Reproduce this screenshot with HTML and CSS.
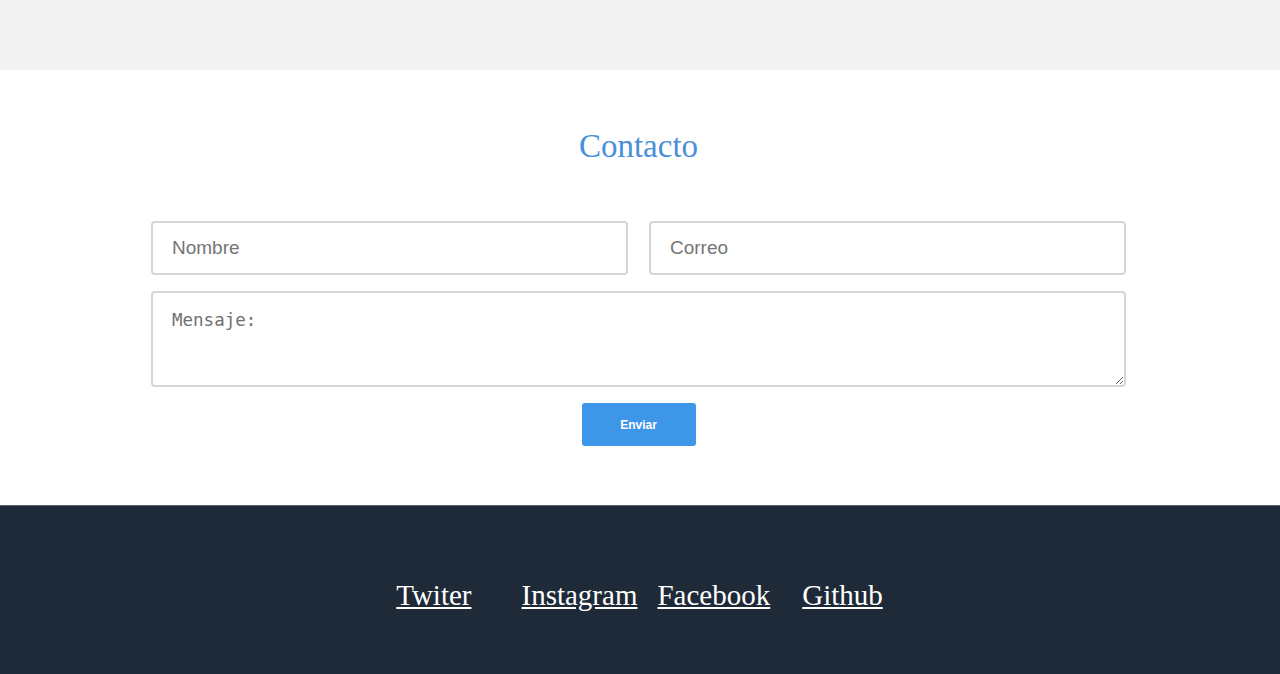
FILE: index.html
```html
<!DOCTYPE html>
<html lang="es">
<head>
<meta charset="utf-8">
<title>Contacto</title>
<link rel="stylesheet" href="styles.css">
</head>
<body>
<header class="topbar"></header>
<section class="contact">
  <h2 class="contact-title">Contacto</h2>
  <form class="contact-form">
    <div class="row">
      <input class="field" type="text" placeholder="Nombre">
      <input class="field" type="email" placeholder="Correo">
    </div>
    <textarea class="message" placeholder="Mensaje:"></textarea>
    <button class="send" type="button">Enviar</button>
  </form>
</section>
<footer class="footer">
  <nav class="social">
    <a href="#" class="link link-tw">Twiter</a>
    <a href="#" class="link link-ig">Instagram</a>
    <a href="#" class="link link-fb">Facebook</a>
    <a href="#" class="link link-gh">Github</a>
  </nav>
</footer>
</body>
</html>
```
FILE: styles.css
```css
html, body {
  margin: 0;
  padding: 0;
}
body {
  font-family: "Liberation Serif", "Times New Roman", serif;
  background: #1f2a38;
}
.topbar {
  height: 70px;
  background: #f2f2f2;
}
.contact {
  background: #ffffff;
  padding: 57px 3px 59px 0;
}
.contact-title {
  margin: 0;
  text-align: center;
  font-weight: normal;
  font-size: 33px;
  line-height: 38px;
  color: #4a90d9;
}
.contact-form {
  width: 975px;
  margin: 56px auto 0;
  display: flex;
  flex-direction: column;
  align-items: center;
  gap: 16px;
}
.row {
  width: 100%;
  display: flex;
  gap: 21px;
}
.field, .message {
  box-sizing: border-box;
  border: 2px solid #d6d6d6;
  border-radius: 4px;
  background: #fff;
  outline: none;
}
.field {
  flex: 1;
  height: 54px;
  padding: 0 19px;
  font-family: "Liberation Sans", Arial, sans-serif;
  font-size: 19px;
  color: #333;
}
.field::placeholder {
  color: #757575;
}
.message {
  width: 100%;
  height: 96px;
  padding: 17px 19px;
  font-family: "DejaVu Sans Mono", "Liberation Mono", monospace;
  font-size: 17.5px;
  resize: vertical;
}
.message::placeholder {
  color: #707070;
}
.send {
  width: 114px;
  height: 43px;
  border: none;
  border-radius: 3px;
  background: #3d96e8;
  color: #fff;
  font-family: "Liberation Sans", Arial, sans-serif;
  font-weight: bold;
  font-size: 12px;
  cursor: pointer;
}
.footer {
  background: #1f2a38;
  border-top: 1px solid #55626e;
  padding: 73px 1px 60px 0;
}
.social {
  display: flex;
  justify-content: center;
}
.link {
  color: #ffffff;
  font-size: 29px;
  line-height: 33px;
  text-decoration: underline;
}
.link-ig { margin-left: 50px; }
.link-fb { margin-left: 20px; }
.link-gh { margin-left: 32px; }
```
